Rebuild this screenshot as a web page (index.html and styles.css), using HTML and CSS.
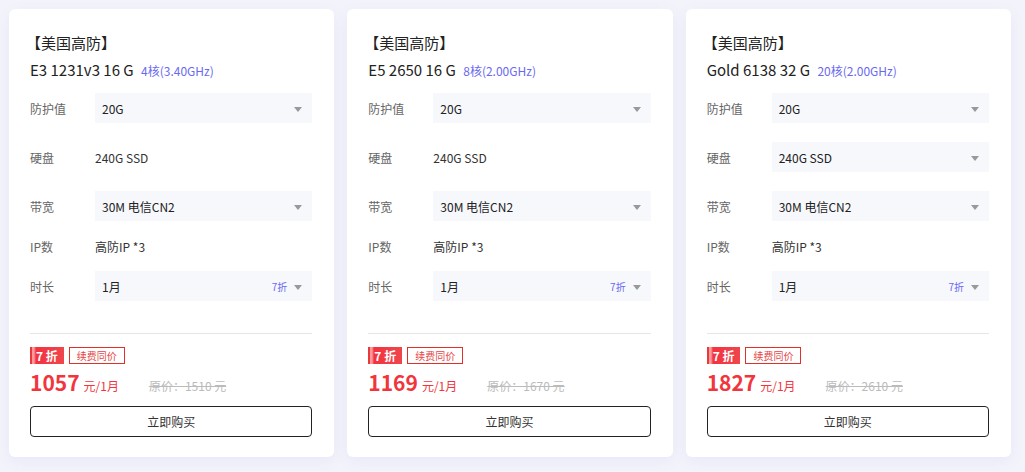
FILE: index.html
```html
<!DOCTYPE html>
<html lang="zh-CN">
<head>
    <meta charset="UTF-8">
    <meta name="viewport" content="width=device-width, initial-scale=1.0">
    <title>美国高防服务器</title>
    <link rel="stylesheet" href="styles.css">
</head>
<body>
    <main class="plans">
        <!-- E3 -->
        <section class="plan">
            <h3 class="plan-region">【美国高防】</h3>
            <p class="plan-model">E3 1231v3 16 G <span class="cpu">4核(3.40GHz)</span></p>
            <div class="spec">
                <span class="label">防护值</span>
                <div class="select"><span>20G</span><i class="caret"></i></div>
            </div>
            <div class="spec">
                <span class="label">硬盘</span>
                <span class="value">240G SSD</span>
            </div>
            <div class="spec">
                <span class="label">带宽</span>
                <div class="select"><span>30M 电信CN2</span><i class="caret"></i></div>
            </div>
            <div class="spec spec-short">
                <span class="label">IP数</span>
                <span class="value">高防IP *3</span>
            </div>
            <div class="spec">
                <span class="label">时长</span>
                <div class="select"><span>1月</span><em class="off">7折</em><i class="caret"></i></div>
            </div>
            <div class="plan-foot">
                <div class="tags">
                    <span class="tag-off">7 折</span>
                    <span class="tag-renew">续费同价</span>
                </div>
                <div class="price">
                    <strong>1057</strong><span class="unit">元/1月</span>
                    <del>原价：1510 元</del>
                </div>
                <a class="buy" href="#">立即购买</a>
            </div>
        </section>

        <!-- E5 -->
        <section class="plan">
            <h3 class="plan-region">【美国高防】</h3>
            <p class="plan-model">E5 2650 16 G <span class="cpu">8核(2.00GHz)</span></p>
            <div class="spec">
                <span class="label">防护值</span>
                <div class="select"><span>20G</span><i class="caret"></i></div>
            </div>
            <div class="spec">
                <span class="label">硬盘</span>
                <span class="value">240G SSD</span>
            </div>
            <div class="spec">
                <span class="label">带宽</span>
                <div class="select"><span>30M 电信CN2</span><i class="caret"></i></div>
            </div>
            <div class="spec spec-short">
                <span class="label">IP数</span>
                <span class="value">高防IP *3</span>
            </div>
            <div class="spec">
                <span class="label">时长</span>
                <div class="select"><span>1月</span><em class="off">7折</em><i class="caret"></i></div>
            </div>
            <div class="plan-foot">
                <div class="tags">
                    <span class="tag-off">7 折</span>
                    <span class="tag-renew">续费同价</span>
                </div>
                <div class="price">
                    <strong>1169</strong><span class="unit">元/1月</span>
                    <del>原价：1670 元</del>
                </div>
                <a class="buy" href="#">立即购买</a>
            </div>
        </section>

        <!-- Gold -->
        <section class="plan">
            <h3 class="plan-region">【美国高防】</h3>
            <p class="plan-model">Gold 6138 32 G <span class="cpu">20核(2.00GHz)</span></p>
            <div class="spec">
                <span class="label">防护值</span>
                <div class="select"><span>20G</span><i class="caret"></i></div>
            </div>
            <div class="spec">
                <span class="label">硬盘</span>
                <div class="select"><span>240G SSD</span><i class="caret"></i></div>
            </div>
            <div class="spec">
                <span class="label">带宽</span>
                <div class="select"><span>30M 电信CN2</span><i class="caret"></i></div>
            </div>
            <div class="spec spec-short">
                <span class="label">IP数</span>
                <span class="value">高防IP *3</span>
            </div>
            <div class="spec">
                <span class="label">时长</span>
                <div class="select"><span>1月</span><em class="off">7折</em><i class="caret"></i></div>
            </div>
            <div class="plan-foot">
                <div class="tags">
                    <span class="tag-off">7 折</span>
                    <span class="tag-renew">续费同价</span>
                </div>
                <div class="price">
                    <strong>1827</strong><span class="unit">元/1月</span>
                    <del>原价：2610 元</del>
                </div>
                <a class="buy" href="#">立即购买</a>
            </div>
        </section>
    </main>
</body>
</html>
```

FILE: styles.css
```css
/* General Styles */
body {
    margin: 0;
    background: #f3f3fb;
    font-family: "Noto Sans CJK SC", "Noto Sans", sans-serif;
    color: #222;
}

.plans {
    display: flex;
    gap: 13px;
    padding: 9px 14px 14px 9px;
}

/* Card */
.plan {
    flex: 1;
    background: #fff;
    border-radius: 6px;
    box-shadow: 0 4px 14px rgba(120, 120, 200, 0.08);
    padding: 23px 22px 20px 21px;
}

.plan-region {
    margin: 0 0 0 -4px;
    font-size: 15px;
    font-weight: normal;
    line-height: 22px;
}

.plan-model {
    margin: 5px 0 11px;
    font-size: 15px;
    line-height: 22px;
}

.plan-model .cpu {
    font-size: 12px;
    color: #6a6af0;
    margin-left: 4px;
}

/* Spec rows */
.spec {
    display: flex;
    align-items: center;
    height: 30px;
    margin-bottom: 19px;
    font-size: 12px;
}

.spec-short { height: 12px; }

.spec .label {
    width: 65px;
    color: #666;
}

.spec .value { color: #333; }

.select {
    flex: 1;
    display: flex;
    align-items: center;
    height: 30px;
    padding: 0 10px 0 7px;
    background: #f7f8fc;
    color: #222;
}

.select span { flex: 1; }

.select .off {
    font-style: normal;
    font-size: 10px;
    color: #6a6af0;
    margin-right: 7px;
}

.caret {
    width: 0;
    height: 0;
    border-left: 4px solid transparent;
    border-right: 4px solid transparent;
    border-top: 5px solid #999;
    margin-top: 2px;
}

/* Footer: tags, price, button */
.plan-foot {
    border-top: 1px solid #e6e6e6;
    margin-top: 32px;
    padding-top: 13px;
}

.tags {
    display: flex;
    gap: 5px;
    height: 17px;
}

.tag-off {
    display: flex;
    align-items: center;
    padding: 0 6px 0 6px;
    font-size: 12px;
    font-weight: bold;
    color: #fff;
    background: linear-gradient(90deg, #e8393d 0 2px, #ff9a9a 2px 4px, #f2333f 6px, #f0454c);
}

.tag-renew {
    display: flex;
    align-items: center;
    padding: 0 7px;
    border: 1px solid #e0302a;
    font-size: 10px;
    color: #e64545;
}

.price {
    display: flex;
    align-items: baseline;
    height: 30px;
    margin: 3px 0 9px;
    color: #f2353d;
}

.price strong {
    font-size: 21px;
    font-weight: bold;
    line-height: 30px;
}

.price .unit {
    font-size: 12px;
    margin-left: 4px;
}

.price del {
    font-size: 12px;
    color: #bbb;
    margin-left: 30px;
}

.buy {
    display: block;
    height: 29px;
    line-height: 29px;
    border: 1px solid #222;
    border-radius: 4px;
    text-align: center;
    font-size: 12px;
    color: #333;
    text-decoration: none;
}
```
